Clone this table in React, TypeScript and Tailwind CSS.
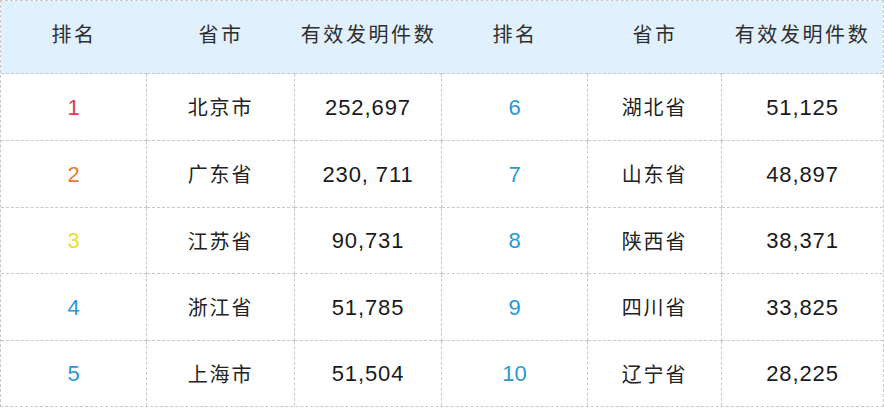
const rows = [
  { rank: 1, color: "text-[#e23a4e]", prov: "北京市", num: "252,697" },
  { rank: 2, color: "text-[#e2802e]", prov: "广东省", num: "230, 711" },
  { rank: 3, color: "text-[#ece024]", prov: "江苏省", num: "90,731" },
  { rank: 4, color: "text-[#2a98d6]", prov: "浙江省", num: "51,785" },
  { rank: 5, color: "text-[#2a98d6]", prov: "上海市", num: "51,504" },
];

const rows2 = [
  { rank: 6, prov: "湖北省", num: "51,125" },
  { rank: 7, prov: "山东省", num: "48,897" },
  { rank: 8, prov: "陕西省", num: "38,371" },
  { rank: 9, prov: "四川省", num: "33,825" },
  { rank: 10, prov: "辽宁省", num: "28,225" },
];

const cjk = "font-['Noto_Sans_CJK_SC',sans-serif]";
const lat = "font-['Liberation_Sans',Arial,sans-serif]";
const cell = "flex items-center justify-center border-dashed border-[#c9c9c9]";

export default function App() {
  return (
    <div className="w-[884px] h-[408px] bg-white">
      <div className="w-[884px] h-[407px] border border-dashed border-[#c9c9c9] grid grid-cols-[146px_148px_147px_146px_134px_1fr] grid-rows-[73px_67px_67px_66px_67px_1fr]">
        {["排名", "省市", "有效发明件数", "排名", "省市", "有效发明件数"].map((h, i) => (
          <div
            key={i}
            className={`${cell} border-b bg-[#e0f0fc] pb-[7px] text-[20px] tracking-[2.6px] text-[#2e2e2e] ${cjk}`}
          >
            {h}
          </div>
        ))}
        {rows.map((r, i) => {
          const s = rows2[i];
          const b = i < 4 ? "border-b" : "";
          return [
            <div key={`a${i}`} className={`${cell} ${b} border-r text-[22px] ${lat} ${r.color}`}>
              {r.rank}
            </div>,
            <div key={`b${i}`} className={`${cell} ${b} border-r text-[20px] tracking-[1.8px] text-[#222] ${cjk}`}>
              {r.prov}
            </div>,
            <div key={`c${i}`} className={`${cell} ${b} border-r text-[22px] tracking-[0.9px] text-[#1a1a1a] ${lat}`}>
              {r.num}
            </div>,
            <div key={`d${i}`} className={`${cell} ${b} border-r text-[22px] ${lat} text-[#2a98d6]`}>
              {s.rank}
            </div>,
            <div key={`e${i}`} className={`${cell} ${b} border-r text-[20px] tracking-[1.8px] text-[#222] ${cjk}`}>
              {s.prov}
            </div>,
            <div key={`f${i}`} className={`${cell} ${b} text-[22px] tracking-[0.9px] text-[#1a1a1a] ${lat}`}>
              {s.num}
            </div>,
          ];
        })}
      </div>
    </div>
  );
}
